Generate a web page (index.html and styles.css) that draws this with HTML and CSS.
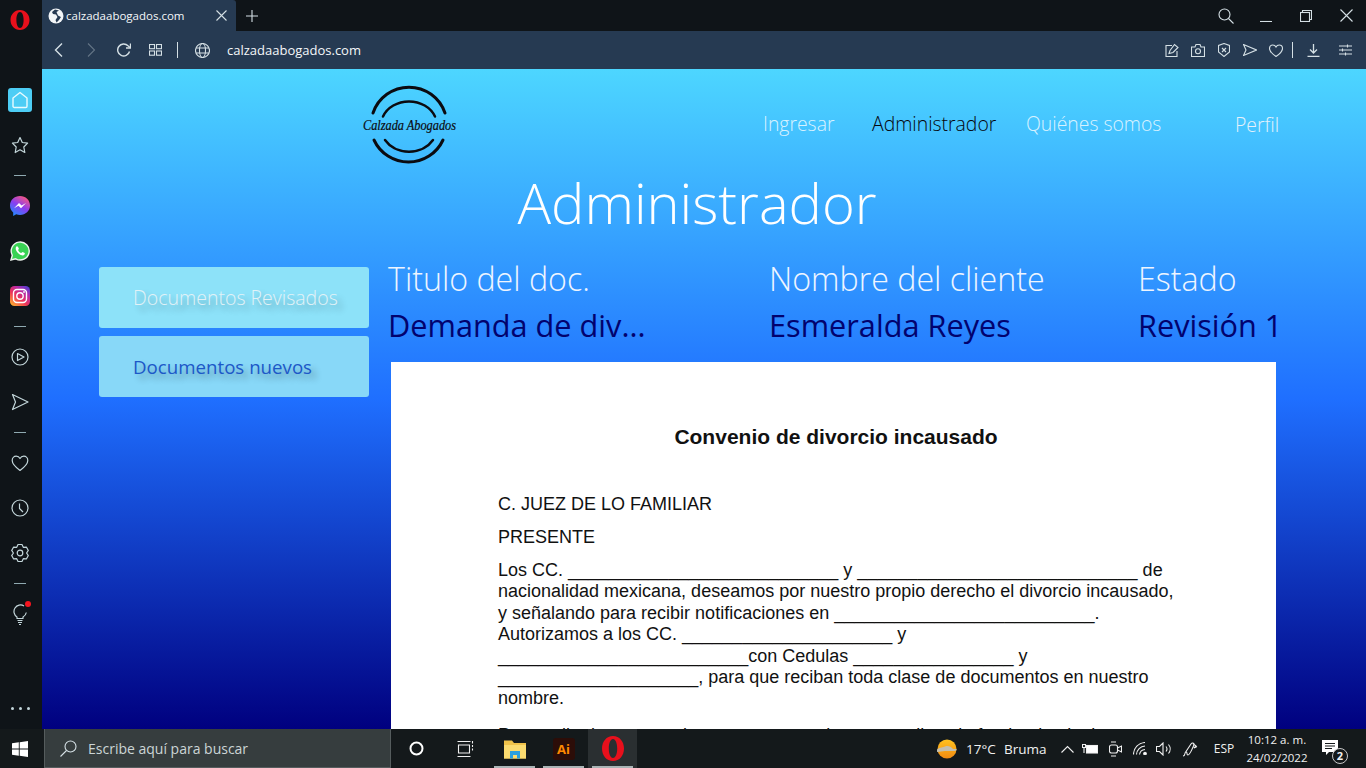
FILE: index.html
```html
<!DOCTYPE html>
<html lang="es">
<head>
    <meta charset="UTF-8">
    <meta name="viewport" content="width=device-width, initial-scale=1.0">
    <title>Calzada Abogados</title>
    <link rel="stylesheet" href="styles.css">
</head>
<body>
    <div class="desktop">
        <aside class="rail">
            <div class="rail-logo">
                <svg width="20" height="22" viewBox="0 0 20 22"><path fill-rule="evenodd" d="M10 1C4.500 1 .5 5.500.5 11s4 10 9.500 10 9.500-4.500 9.500-10S15.500 1 10 1zM10 3c2.200 0 3.600 3.500 3.600 8s-1.400 8-3.600 8-3.600-3.500-3.600-8S7.800 3 10 3z" fill="#e8101c"/></svg>
            </div>
            <div class="rail-list">
                <div class="rail-btn"><span class="home-box"><svg width="18" height="18" viewBox="0 0 18 18"><path d="M9 1.500 16 7v8.200a1.300 1.300 0 0 1-1.300 1.300H3.300A1.300 1.300 0 0 1 2 15.200V7z" fill="none" stroke="#e8fbff" stroke-width="1.400" stroke-linejoin="round"/></svg></span></div>
                <div class="rail-btn"><svg class="line-icon" width="18" height="18" viewBox="0 0 18 18"><path d="M9 1.500 11.300 6.500 16.600 7.200 12.800 11 13.800 16.500 9 13.800 4.200 16.500 5.200 11 1.400 7.200 6.700 6.500z"/></svg></div>
                <div class="rail-sep"></div>
                <div class="rail-btn">
                    <svg width="20" height="20" viewBox="0 0 20 20"><defs><linearGradient id="msg" x1="0.2" y1="1" x2="0.8" y2="0"><stop offset="0" stop-color="#1f8cff"/><stop offset="0.5" stop-color="#8a3df0"/><stop offset="1" stop-color="#ff5a7a"/></linearGradient></defs><path d="M10 0C4.400 0 0 4.100 0 9.500c0 2.900 1.200 5.300 3.200 7V20l3-1.700c1.200.4 2.500.6 3.800.6 5.600 0 10-4 10-9.400S15.600 0 10 0z" fill="url(#msg)"/><path d="M4 12.200 9 7l2.600 2.500L16 7l-5 5.300-2.600-2.500z" fill="#fff"/></svg>
                </div>
                <div class="rail-btn">
                    <svg width="20" height="20" viewBox="0 0 20 20"><path d="M1 19l1.300-4.700A9 9 0 1 1 5.700 17.800z" fill="#39d354" stroke="#eef5ee" stroke-width="1.400"/><path d="M7 5.200c-.5 0-1.300.7-1.300 2.200 0 2.900 3.800 7 7 7 1.400 0 2.200-1 2.200-1.800 0-.5-2-1.500-2.400-1.500s-.8 1-1.200 1c-1 0-3.200-2.200-3.200-3.100 0-.5.800-.8.800-1.300S7.700 5.200 7 5.200z" fill="#fff"/></svg>
                </div>
                <div class="rail-btn">
                    <svg width="20" height="20" viewBox="0 0 20 20"><defs><linearGradient id="insta" x1="0.1" y1="1" x2="0.9" y2="0"><stop offset="0" stop-color="#fdb32c"/><stop offset="0.4" stop-color="#ee3558"/><stop offset="0.7" stop-color="#b82aa5"/><stop offset="1" stop-color="#4a3fd6"/></linearGradient></defs><rect width="20" height="20" rx="4.500" fill="url(#insta)"/><rect x="3.500" y="3.500" width="13" height="13" rx="3.500" fill="none" stroke="#fff" stroke-width="1.400"/><circle cx="10" cy="10" r="3.200" fill="none" stroke="#fff" stroke-width="1.400"/><circle cx="14" cy="6" r="0.900" fill="#fff"/></svg>
                </div>
                <div class="rail-sep"></div>
                <div class="rail-btn"><svg class="line-icon" width="18" height="18" viewBox="0 0 18 18"><circle cx="9" cy="9" r="8"/><path d="M6.500 5.500 13 9l-6.500 3.500z"/></svg></div>
                <div class="rail-btn"><svg class="line-icon" width="18" height="18" viewBox="0 0 18 18"><path d="M1.500 1.500 17 9 1.500 16.500 4.500 9z"/></svg></div>
                <div class="rail-sep"></div>
                <div class="rail-btn"><svg class="line-icon" width="18" height="18" viewBox="0 0 18 18"><path d="M9 16.500C5 13.500 1.200 10.500 1.200 6.500 1.200 4 3 2.200 5.200 2.200 6.800 2.200 8.200 3 9 4.500 9.800 3 11.200 2.200 12.800 2.200 15 2.200 16.800 4 16.800 6.500 16.800 10.500 13 13.500 9 16.500z"/></svg></div>
                <div class="rail-btn"><svg class="line-icon" width="18" height="18" viewBox="0 0 18 18"><circle cx="9" cy="9" r="8"/><path d="M8.500 4.500V9.500L12 13"/></svg></div>
                <div class="rail-btn"><svg class="line-icon" width="18" height="18" viewBox="0 0 18 18"><circle cx="9" cy="9" r="2.800"/><path d="M7.040.52H10.960L12.300 3.280 15.360 3.070 17.320 6.460 15.600 9 17.320 11.540 15.360 14.930 12.300 14.720 10.960 17.480H7.040L5.700 14.720 2.640 14.930.68 11.540 2.400 9 .68 6.460 2.640 3.070 5.700 3.280z"/></svg></div>
                <div class="rail-sep"></div>
                <div class="rail-btn bulb">
                    <svg class="line-icon" width="18" height="22" viewBox="0 0 18 22"><path d="M13 3A6.500 6.500 0 1 0 6 14V15.500H12V14A6.500 6.500 0 0 0 15.300 9.500M6.500 17.500h5M7 19.500h4M8 21.500h2"/></svg>
                    <span class="bulb-dot"></span>
                </div>
            </div>
            <div class="rail-dots"><span></span><span></span><span></span></div>
        </aside>

        <div class="browser">
            <div class="tabbar">
                <div class="tab">
                    <svg width="16" height="16" viewBox="0 0 16 16"><circle cx="8" cy="8" r="7.500" fill="#f2f5f7"/><path d="M7 1.500 4 4l1 2 3 .5L9.500 9l-2 3 1 2.500L11 12l2-3-3-1.500L8.500 4 11 2.500z" fill="#263a52"/></svg>
                    <span class="tab-title">calzadaabogados.com</span>
                    <svg class="thin-icon tab-close" width="11" height="11" viewBox="0 0 11 11"><path d="M.5.500l10 10M10.500.500l-10 10"/></svg>
                </div>
                <svg class="thin-icon tab-new" width="12" height="12" viewBox="0 0 12 12"><path d="M6 0v12M0 6h12"/></svg>
                <div class="window-btns">
                    <svg class="thin-icon" width="16" height="16" viewBox="0 0 16 16"><circle cx="6.500" cy="6.500" r="5.500"/><path d="M10.500 10.500 15.500 15.500"/></svg>
                    <svg class="thin-icon" width="12" height="12" viewBox="0 0 12 12"><path d="M0 11.500h12"/></svg>
                    <svg class="thin-icon" width="12" height="12" viewBox="0 0 12 12"><rect x=".5" y="2.500" width="9" height="9"/><path d="M2.500 2.500v-2h9v9h-2"/></svg>
                    <svg class="thin-icon" width="13" height="13" viewBox="0 0 13 13"><path d="M.5.500l12 12M12.500.500l-12 12"/></svg>
                </div>
            </div>
            <div class="addressbar">
                <svg class="thin-icon nav-back" width="9" height="14" viewBox="0 0 9 14"><path d="M8 .5 1.500 7 8 13.500" stroke-width="1.400"/></svg>
                <svg class="thin-icon nav-fwd" width="9" height="14" viewBox="0 0 9 14"><path d="M1 .5 7.500 7 1 13.500"/></svg>
                <svg class="thin-icon nav-reload" width="14" height="14" viewBox="0 0 14 14"><path d="M12.500 8.500A6 6 0 1 1 11 2.800L13 4.500" stroke-width="1.400"/><path d="M13.500.5v4.500H9" stroke-width="1.400"/></svg>
                <svg class="thin-icon nav-grid" width="13" height="12" viewBox="0 0 13 12"><rect x=".5" y=".5" width="5" height="4.200"/><rect x="7.500" y=".5" width="5" height="4.200"/><rect x=".5" y="7" width="5" height="4.200"/><rect x="7.500" y="7" width="5" height="4.200"/></svg>
                <span class="nav-sep"></span>
                <svg class="thin-icon nav-globe" width="15" height="15" viewBox="0 0 15 15"><circle cx="7.500" cy="7.500" r="7"/><ellipse cx="7.500" cy="7.500" rx="3" ry="7"/><path d="M1 5h13M1 10h13"/></svg>
                <span class="url">calzadaabogados.com</span>
                <div class="addr-tools">
                    <svg class="thin-icon" width="14" height="14" viewBox="0 0 14 14"><path d="M7 2.500H1v11h11V8"/><path d="M4 10.500 5 7.500 9.500 1.500 13 4.500 8 9.500z"/></svg>
                    <svg class="thin-icon" width="14" height="13" viewBox="0 0 14 13"><path d="M.5 3h3.500L5 .5h4L10 3h3.500v9.500H.5z"/><circle cx="7" cy="7.200" r="2.500"/></svg>
                    <svg class="thin-icon" width="12" height="14" viewBox="0 0 12 14"><path d="M6 .5 11.500 2.500V9L6 13.500.5 9V2.500z"/><path d="M4 5l4 4M8 5 4 9"/></svg>
                    <svg class="thin-icon" width="14" height="12" viewBox="0 0 14 12"><path d="M.5.500 13.500 6 .5 11.500 3 6z"/></svg>
                    <svg class="thin-icon" width="14" height="13" viewBox="0 0 14 13"><path d="M7 12.500C3.500 10 .5 7.500.5 4.500.5 2.500 2 1 3.800 1 5.200 1 6.400 1.800 7 3 7.600 1.800 8.800 1 10.200 1 12 1 13.500 2.500 13.500 4.500 13.500 7.500 10.500 10 7 12.500z"/></svg>
                    <span class="tools-sep"></span>
                    <svg class="thin-icon" width="13" height="13" viewBox="0 0 13 13"><path d="M6.500 0v8.500M3 5.500l3.500 3.500L10 5.500M.5 12.500h12" stroke-width="1.300"/></svg>
                    <svg class="thin-icon" width="13" height="12" viewBox="0 0 13 12"><path d="M0 2h13M0 6h13M0 10h13M8.500.5v3M3.500 4.500v3M6.500 8.500v3"/></svg>
                </div>
            </div>

            <main class="page">
                <header class="site-header">
                    <svg class="logo" width="100" height="80" viewBox="0 0 100 80">
                        <g fill="none" stroke="#0b0b10" stroke-linecap="round">
                            <path d="M14 28A38 38 0 0 1 86 28" stroke-width="3"/>
                            <path d="M24 31.500A28 24 0 0 1 76 31.500" stroke-width="2.500"/>
                            <path d="M15 55A38 38 0 0 0 84 55" stroke-width="3"/>
                            <path d="M26 55A28 24 0 0 0 74 55" stroke-width="2.500"/>
                        </g>
                        <text class="logo-text" x="4" y="45" textLength="93" lengthAdjust="spacingAndGlyphs">Calzada Abogados</text>
                    </svg>
                    <nav class="site-nav">
                        <a class="nav-link">Ingresar</a>
                        <a class="nav-link current">Administrador</a>
                        <a class="nav-link">Quiénes somos</a>
                        <a class="nav-link profile">Perfil</a>
                    </nav>
                </header>

                <h1 class="page-title">Administrador</h1>

                <div class="content">
                    <div class="side-menu">
                        <a class="side-btn muted">Documentos Revisados</a>
                        <a class="side-btn">Documentos nuevos</a>
                    </div>
                    <section class="doc-area">
                        <div class="doc-table">
                            <span class="doc-head">Titulo del doc.</span>
                            <span class="doc-head">Nombre del cliente</span>
                            <span class="doc-head">Estado</span>
                            <span class="doc-cell">Demanda de div...</span>
                            <span class="doc-cell">Esmeralda Reyes</span>
                            <span class="doc-cell">Revisión 1</span>
                        </div>
                        <article class="paper">
                            <h2 class="paper-title">Convenio de divorcio incausado</h2>
                            <p class="paper-addr first">C. JUEZ DE LO FAMILIAR</p>
                            <p class="paper-addr">PRESENTE</p>
                            <div class="paper-body">
                                <div>Los CC. ___________________________ y ____________________________ de</div>
                                <div>nacionalidad mexicana, deseamos por nuestro propio derecho el divorcio incausado,</div>
                                <div>y señalando para recibir notificaciones en __________________________.</div>
                                <div>Autorizamos a los CC. _____________________ y</div>
                                <div>_________________________con Cedulas ________________ y</div>
                                <div>____________________, para que reciban toda clase de documentos en nuestro</div>
                                <div>nombre.</div>
                            </div>
                            <p class="paper-next">Por medio de este escrito promovemos el presente divorcio fundando el mismo con</p>
                        </article>
                    </section>
                </div>
            </main>
        </div>

        <footer class="taskbar">
            <div class="start">
                <svg width="16" height="16" viewBox="0 0 16 16"><path d="M0 2.300 6.800 1.300V7.500H0zM7.700 1.200 16 0V7.500H7.700zM0 8.500H6.800V14.700L0 13.700zM7.700 8.500H16V16L7.700 14.800z" fill="#fff"/></svg>
            </div>
            <div class="search">
                <svg class="thin-icon" width="17" height="17" viewBox="0 0 17 17"><circle cx="10.500" cy="6.500" r="5.500"/><path d="M6.500 10.500 .5 16.500"/></svg>
                <span>Escribe aquí para buscar</span>
            </div>
            <div class="task-apps">
                <div class="task-app"><svg width="15" height="15" viewBox="0 0 15 15"><circle cx="7.500" cy="7.500" r="6" fill="none" stroke="#fff" stroke-width="2"/></svg></div>
                <div class="task-app"><svg class="white-icon" width="17" height="16" viewBox="0 0 17 16"><path d="M.5.500h13M.5 15.500h13M1.500 4h11v8h-11zM15.500 4v2M15.500 7.500v2M15.500 0v2.500"/></svg></div>
                <div class="task-app open">
                    <svg width="22" height="20" viewBox="0 0 22 20"><path d="M0 1.500h8l2 2.500h12v15.500H0z" fill="#f0c24a"/><path d="M0 6h22v13.500H0z" fill="#fbdb70"/><path d="M6 12h10v7.500h-3v-3.500H9v3.500H6z" fill="#2a9fe0"/></svg>
                </div>
                <div class="task-app open">
                    <span class="ai-icon">Ai</span>
                </div>
                <div class="task-app open active">
                    <svg width="22" height="25" viewBox="0 0 22 25"><path fill-rule="evenodd" d="M11 0C4.500 0 0 5.500 0 12.500S4.500 25 11 25s11-5.500 11-12.500S17.500 0 11 0zM11 3c2.600 0 4.200 4.300 4.200 9.500S13.600 22 11 22s-4.200-4.300-4.200-9.500S8.400 3 11 3z" fill="#e8101c"/></svg>
                </div>
            </div>
            <div class="tray">
                <svg class="tray-sun" width="22" height="22" viewBox="0 0 22 22"><defs><linearGradient id="sun" x1="0" y1="0" x2="0" y2="1"><stop offset="0" stop-color="#ffc21f"/><stop offset="1" stop-color="#f08a12"/></linearGradient></defs><circle cx="11" cy="11" r="9.500" fill="url(#sun)"/><path d="M1 11.500c3-2.500 6-2 8-3 3-1 6 0 8 2.500h3.500c.5 1-.5 2-2 2H9c-3 0-5 1-8 1z" fill="#c4bfae"/></svg>
                <span class="tray-text">17°C</span>
                <span class="tray-text">Bruma</span>
                <svg class="white-icon" width="13" height="8" viewBox="0 0 13 8"><path d="M.5 7.500 6.500 1.500 12.500 7.500"/></svg>
                <svg class="white-icon" width="16" height="12" viewBox="0 0 16 12"><rect x="4.500" y="2.500" width="11" height="7.500" fill="#fff"/><path d="M.5 1.500h3v3h-3zM2 4.500V10"/></svg>
                <svg class="white-icon" width="13" height="16" viewBox="0 0 13 16"><rect x=".5" y="4" width="8" height="8" rx="2"/><path d="M8.500 7 12.500 5v6L8.500 9M2 1h5M2 15h5"/></svg>
                <svg class="white-icon" width="15" height="13" viewBox="0 0 15 13"><path d="M.5 12.500A12 12 0 0 1 12 .5M3.500 12.500A9 9 0 0 1 12 4M6.500 12.500A6 6 0 0 1 12 7.500"/><circle cx="12" cy="11.500" r="1.300" fill="#fff"/></svg>
                <svg class="white-icon" width="17" height="14" viewBox="0 0 17 14"><path d="M.5 4.500h3L7 1v12L3.500 9.500h-3zM10 4.500a4 4 0 0 1 0 5M12.500 2.500a7 7 0 0 1 0 9"/></svg>
                <svg class="white-icon" width="17" height="16" viewBox="0 0 17 16"><path d="M1 15c3 0 1-4 3-4s0 3 2 3 6-10 6-11-2-1.500-3 0L3 12M11 2.500l3 2.500-2 2 3-1.500"/></svg>
                <span class="tray-text small">ESP</span>
                <div class="clock"><span>10:12 a. m.</span><span>24/02/2022</span></div>
                <div class="notif">
                    <svg width="16" height="15" viewBox="0 0 16 15"><path d="M0 0h16v12H7l-3 3v-3H0z" fill="#fff"/><path d="M3 3.500h10M3 6h10M3 8.500h7" stroke="#14191b"/></svg>
                    <span class="notif-count">2</span>
                </div>
            </div>
        </footer>
    </div>
</body>
</html>
```

FILE: styles.css
```css
* {
    box-sizing: border-box;
}
body {
    margin: 0;
    height: 100vh;
    overflow: hidden;
    font-family: "Open Sans", "Noto Sans", sans-serif;
    background-color: #0f1418;
}
svg {
    display: block;
    flex: none;
}
.desktop {
    display: grid;
    grid-template-columns: 42px 1fr;
    grid-template-rows: 729px 39px;
    height: 768px;
}

/* opera side rail */
.rail {
    background-color: #0f1418;
    display: flex;
    flex-direction: column;
    align-items: center;
    padding-right: 2px;
}
.rail-logo {
    height: 77px;
    padding-top: 9px;
}
.rail-list {
    width: 100%;
}
.rail-btn {
    height: 45px;
    display: flex;
    align-items: center;
    justify-content: center;
    position: relative;
}
.rail-sep {
    height: 16px;
    display: flex;
    align-items: center;
    justify-content: center;
}
.rail-sep::before {
    content: "";
    width: 12px;
    height: 1px;
    background-color: #8fa9b0;
}
.home-box {
    width: 24px;
    height: 24px;
    border-radius: 3px;
    background-color: #4dcdf5;
    display: flex;
    align-items: center;
    justify-content: center;
}
.line-icon {
    fill: none;
    stroke: #c3d6da;
    stroke-width: 1.2;
    stroke-linejoin: round;
}
.bulb-dot {
    position: absolute;
    top: 10px;
    left: 25px;
    width: 6px;
    height: 6px;
    border-radius: 50%;
    background-color: #f5151f;
}
.rail-dots {
    margin-top: auto;
    margin-bottom: 19px;
    display: flex;
    gap: 5px;
}
.rail-dots span {
    width: 3px;
    height: 3px;
    border-radius: 50%;
    background-color: #c3d6da;
}

/* browser chrome */
.browser {
    min-width: 0;
    display: flex;
    flex-direction: column;
    overflow: hidden;
}
.thin-icon {
    fill: none;
    stroke: #d5e0e5;
    stroke-width: 1.100;
}
.white-icon {
    fill: none;
    stroke: #f0f0f0;
    stroke-width: 1.100;
}
.tabbar {
    height: 31px;
    flex: none;
    display: flex;
    align-items: center;
    background-color: #0f1418;
}
.tab {
    width: 196px;
    height: 31px;
    margin-left: -2px;
    padding-left: 8px;
    display: flex;
    align-items: center;
    background-color: #263a52;
    border-radius: 3px 3px 0 0;
}
.tab-title {
    margin-left: 2px;
    font-size: 11.500px;
    color: #f4f7f9;
}
.tab-close {
    margin-left: auto;
    margin-right: 9px;
}
.tab-new {
    margin-left: 10px;
}
.window-btns {
    margin-left: auto;
    width: 160px;
    display: grid;
    grid-template-columns: repeat(4, 40px);
    align-items: center;
    justify-items: center;
}
.addressbar {
    height: 38px;
    flex: none;
    margin-left: -2px;
    background-color: #263a52;
    display: flex;
    align-items: center;
}
.nav-back {
    margin-left: 14px;
}
.nav-fwd {
    margin-left: 24px;
    opacity: 0.35;
}
.nav-reload {
    margin-left: 21px;
}
.nav-grid {
    margin-left: 18px;
}
.nav-sep {
    width: 1px;
    height: 16px;
    background-color: #d5e0e5;
    margin-left: 15px;
}
.nav-globe {
    margin-left: 17px;
}
.url {
    margin-left: 17px;
    font-size: 13px;
    color: #f4f7f9;
}
.addr-tools {
    margin-left: auto;
    margin-right: 7px;
    display: grid;
    grid-template-columns: repeat(5, 26px) 6px 36px 28px;
    align-items: center;
    justify-items: center;
}
.tools-sep {
    width: 1px;
    height: 16px;
    background-color: #d5e0e5;
}

/* page */
.page {
    flex: 1;
    min-height: 0;
    overflow: hidden;
    padding-left: 57px;
    background: linear-gradient(#4dd6ff, #1f6fff 50%, #00007f);
}
.site-header {
    height: 97px;
    margin-left: 260px;
    display: flex;
    padding-top: 16px;
}
.logo {
    width: 100px;
    height: 80px;
}
.logo-text {
    font-family: "Liberation Serif", serif;
    font-style: italic;
    font-size: 14px;
    font-weight: 400;
    fill: #0b0b10;
    stroke: #0b0b10;
    stroke-width: 0.200;
}
.site-nav {
    margin-left: 304px;
    display: grid;
    grid-template-columns: 109px 154px 209px auto;
    height: 28px;
    margin-top: 25px;
}
.nav-link {
    font-size: 19.400px;
    font-weight: 300;
    line-height: 28px;
    color: rgba(255,255,255,0.8);
    white-space: nowrap;
}
.nav-link.current {
    color: #06060c;
}
.nav-link.profile {
    color: #e4f1fb;
    padding-top: 1px;
}
.page-title {
    margin: 0;
    padding-right: 71px;
    text-align: center;
    font-size: 56px;
    font-weight: 300;
    line-height: 72px;
    color: #fff;
}
.content {
    margin-top: 17px;
    display: flex;
    gap: 19px;
}
.side-menu {
    width: 270px;
    flex: none;
    padding-top: 12px;
    display: flex;
    flex-direction: column;
    gap: 8px;
}
.side-btn {
    height: 61px;
    padding-left: 34px;
    display: flex;
    align-items: center;
    font-size: 18.700px;
    color: #1c58c8;
    background-color: #88d8f8;
    border-radius: 3px;
    text-shadow: 5px 5px 6px rgba(0,0,0,0.3);
}
.side-btn.muted {
    color: #e2f2f7;
    background-color: #8de2f9;
    font-size: 19.500px;
    font-weight: 300;
}
.doc-area {
    flex: 1;
    min-width: 0;
}
.doc-table {
    display: grid;
    grid-template-columns: 381px 369px auto;
    grid-auto-rows: 46px;
    row-gap: 1px;
    align-items: center;
    height: 107px;
    align-content: start;
    white-space: nowrap;
}
.doc-head {
    font-size: 32.200px;
    font-weight: 300;
    color: #eef5ff;
}
.doc-cell {
    font-size: 30.700px;
    color: #02026e;
}
.paper {
    width: 885px;
    height: 367px;
    overflow: hidden;
    margin-left: 3px;
    padding-top: 62px;
    padding-left: 107px;
    background-color: #fff;
    font-family: "Liberation Sans", Arial, sans-serif;
    color: #111;
    font-size: 18px;
}
.paper-title {
    margin: 0;
    padding-right: 102px;
    text-align: center;
    font-size: 21px;
    line-height: 26px;
    font-weight: 700;
}
.paper-addr {
    margin: 0;
    height: 33px;
    line-height: 33px;
}
.paper-addr.first {
    margin-top: 38px;
}
.paper-body {
    margin-top: 6px;
    line-height: 21.400px;
    white-space: nowrap;
}
.paper-next {
    margin: 15px 0 0;
    line-height: 21px;
    white-space: nowrap;
}

/* windows taskbar */
.taskbar {
    grid-column: 1 / 3;
    background-color: #14191b;
    display: flex;
    align-items: stretch;
    position: relative;
    z-index: 2;
}
.start {
    width: 44px;
    display: flex;
    align-items: center;
    justify-content: center;
    padding-right: 4px;
}
.search {
    width: 347px;
    display: flex;
    align-items: center;
    gap: 11px;
    padding-left: 15px;
    background-color: #363d3e;
    border: 1px solid #555c5d;
    border-width: 0 1px 1px 1px;
    font-size: 14px;
    color: #ccd5d6;
}
.task-apps {
    display: flex;
    margin-left: 1px;
}
.task-app {
    width: 49px;
    display: flex;
    align-items: center;
    justify-content: center;
    position: relative;
}
.task-app.open::after {
    content: "";
    position: absolute;
    left: 4px;
    right: 4px;
    bottom: 0;
    height: 2px;
    background-color: #a9b4b5;
}
.task-app.active {
    background-color: #2a2f31;
}
.ai-icon {
    width: 22px;
    height: 22px;
    border-radius: 3px;
    background-color: #2c0d08;
    color: #ff8a00;
    font-size: 13px;
    font-weight: 700;
    line-height: 22px;
    text-align: center;
}
.tray {
    margin-left: auto;
    display: grid;
    grid-template-columns: 32px 38px 52px 22px 24px 26px 24px 24px 28px 40px 66px 46px 10px;
    align-items: center;
    justify-items: center;
    color: #f0f0f0;
}
.tray-sun {
    justify-self: start;
    margin-left: 2px;
}
.tray-text {
    font-size: 13.500px;
    justify-self: start;
    white-space: nowrap;
}
.tray-text.small {
    font-size: 12px;
    justify-self: center;
}
.clock {
    display: flex;
    flex-direction: column;
    align-items: center;
    font-size: 11.500px;
    line-height: 18px;
    white-space: nowrap;
}
.notif {
    position: relative;
    width: 24px;
    height: 24px;
    padding-top: 3px;
    padding-left: 1px;
}
.notif-count {
    position: absolute;
    right: -3px;
    bottom: -3px;
    width: 16px;
    height: 16px;
    border-radius: 50%;
    background-color: #14191b;
    border: 1px solid #c8c8c8;
    font-size: 11px;
    font-weight: 700;
    line-height: 14px;
    text-align: center;
}
```
